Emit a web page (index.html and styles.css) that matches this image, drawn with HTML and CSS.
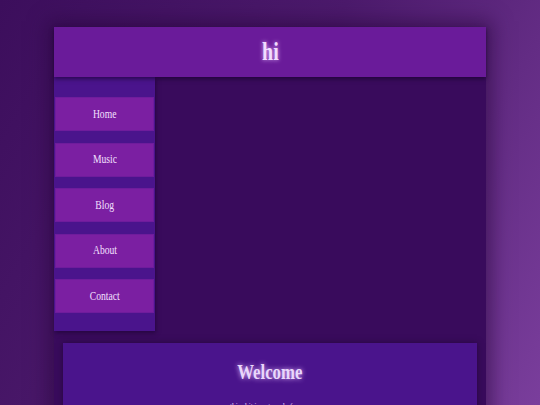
FILE: index.html
```html
<!DOCTYPE html>
<html>
<head>
<meta charset="utf-8">
<link rel="stylesheet" href="styles.css">
</head>
<body>
<div class="page">
  <header class="header"><h1 class="title"><span class="cond">hi</span></h1></header>
  <div class="row">
    <nav class="sidebar">
      <a class="nav-item"><span class="cond">Home</span></a>
      <a class="nav-item"><span class="cond">Music</span></a>
      <a class="nav-item"><span class="cond">Blog</span></a>
      <a class="nav-item"><span class="cond">About</span></a>
      <a class="nav-item"><span class="cond">Contact</span></a>
    </nav>
    <div class="content"></div>
  </div>
  <section class="welcome">
    <h2 class="welcome-title"><span class="cond">Welcome</span></h2>
    <p class="welcome-text"><span class="cond">this shit is not ready for you</span></p>
  </section>
</div>
</body>
</html>
```
FILE: styles.css
```css
html, body {
  margin: 0;
  padding: 0;
  height: 100%;
  overflow: hidden;
}
body {
  background: linear-gradient(120deg, #3c0e5c 0%, #4c1a6c 45%, #7a3e9c 100%);
  font-family: "Liberation Serif", "DejaVu Serif", serif;
}
.cond {
  display: inline-block;
  transform: scaleX(0.8);
}
.page {
  width: 432px;
  margin: 27px auto 0;
  background: #390b5c;
  box-shadow: 0 0 18px 6px rgba(40, 5, 60, 0.55);
  padding-bottom: 40px;
}
.header {
  height: 50px;
  background: #6a1b9a;
  display: flex;
  align-items: center;
  justify-content: center;
  box-shadow: 0 2px 4px rgba(20, 0, 40, 0.6);
  position: relative;
  z-index: 1;
}
.title {
  margin: 0;
  font-size: 25px;
  font-weight: bold;
  color: #f1dcff;
  text-shadow: 0 0 5px rgba(230, 190, 255, 0.9);
}
.row {
  display: flex;
}
.sidebar {
  width: 99px;
  background: #4a148c;
  padding: 20px 1px 18px;
  display: flex;
  flex-direction: column;
  gap: 11.6px;
  box-shadow: 1px 2px 4px rgba(20, 0, 40, 0.5);
}
.nav-item {
  height: 34px;
  background: #7b1fa2;
  box-shadow: inset 0 0 0 1px #6f1c9c;
  display: flex;
  align-items: center;
  justify-content: center;
  font-size: 12px;
  color: #f3e0ff;
}
.content {
  flex: 1;
}
.welcome {
  margin: 12px 9px 0;
  background: #4a148c;
  padding: 17px 0 10px;
  text-align: center;
  box-shadow: 0 0 6px rgba(20, 0, 40, 0.5);
}
.welcome-title {
  margin: 0;
  font-size: 21px;
  font-weight: bold;
  color: #e9d6fb;
  text-shadow: 0 0 6px rgba(230, 190, 255, 0.95);
}
.welcome-text {
  margin: 16px 0 0;
  font-size: 9px;
  color: #e9d6fb;
}
```
